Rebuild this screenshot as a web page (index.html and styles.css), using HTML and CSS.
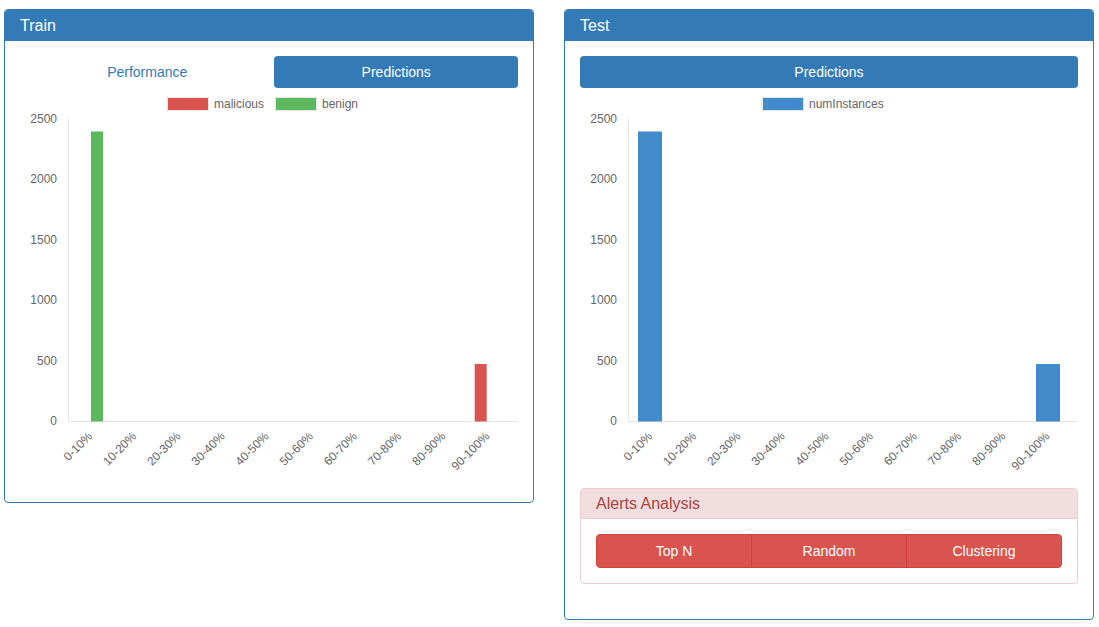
FILE: index.html
```html
<!DOCTYPE html>
<html>
<head>
<meta charset="utf-8">
<link rel="stylesheet" href="styles.css">
</head>
<body>
<div class="page">
  <section class="panel panel-train">
    <div class="panel-heading">Train</div>
    <div class="panel-body">
      <ul class="pills">
        <li class="pill">Performance</li>
        <li class="pill active">Predictions</li>
      </ul>
      <svg class="chart" width="498" height="399" viewBox="0 0 498 399">
        <rect x="147.5" y="9.5" width="41" height="13" fill="#d9534f" stroke="#e6e6e6"/>
        <text class="lg" x="194" y="19.5">malicious</text>
        <rect x="255.5" y="9.5" width="41" height="13" fill="#5cb85c" stroke="#e6e6e6"/>
        <text class="lg" x="302" y="19.5">benign</text>
        <g class="yl">
          <text x="37" y="34.5">2500</text>
          <text x="37" y="95">2000</text>
          <text x="37" y="155.5">1500</text>
          <text x="37" y="216">1000</text>
          <text x="37" y="276.5">500</text>
          <text x="37" y="337">0</text>
        </g>
        <line x1="48.5" y1="30" x2="48.5" y2="334" stroke="#e5e5e5"/>
        <line x1="48" y1="333.5" x2="498" y2="333.5" stroke="#e5e5e5"/>
        <rect x="71" y="43.5" width="12" height="290" fill="#5cb85c"/>
        <rect x="454.7" y="276" width="12" height="57.5" fill="#d9534f"/>
        <g class="xl">
          <text x="73" y="349" transform="rotate(-45 73 349)">0-10%</text>
          <text x="117.15" y="349" transform="rotate(-45 117.15 349)">10-20%</text>
          <text x="161.3" y="349" transform="rotate(-45 161.3 349)">20-30%</text>
          <text x="205.45" y="349" transform="rotate(-45 205.45 349)">30-40%</text>
          <text x="249.6" y="349" transform="rotate(-45 249.6 349)">40-50%</text>
          <text x="293.75" y="349" transform="rotate(-45 293.75 349)">50-60%</text>
          <text x="337.9" y="349" transform="rotate(-45 337.9 349)">60-70%</text>
          <text x="382.05" y="349" transform="rotate(-45 382.05 349)">70-80%</text>
          <text x="426.2" y="349" transform="rotate(-45 426.2 349)">80-90%</text>
          <text x="470.35" y="349" transform="rotate(-45 470.35 349)">90-100%</text>
        </g>
      </svg>
    </div>
  </section>

  <section class="panel panel-test">
    <div class="panel-heading">Test</div>
    <div class="panel-body">
      <ul class="pills">
        <li class="pill active">Predictions</li>
      </ul>
      <svg class="chart" width="498" height="399" viewBox="0 0 498 399">
        <rect x="182.5" y="9.5" width="41" height="13" fill="#428bca" stroke="#e6e6e6"/>
        <text class="lg" x="229" y="19.5">numInstances</text>
        <g class="yl">
          <text x="37" y="34.5">2500</text>
          <text x="37" y="95">2000</text>
          <text x="37" y="155.5">1500</text>
          <text x="37" y="216">1000</text>
          <text x="37" y="276.5">500</text>
          <text x="37" y="337">0</text>
        </g>
        <line x1="48.5" y1="30" x2="48.5" y2="334" stroke="#e5e5e5"/>
        <line x1="48" y1="333.5" x2="497" y2="333.5" stroke="#e5e5e5"/>
        <rect x="58" y="43.5" width="24" height="290" fill="#428bca"/>
        <rect x="456" y="276" width="24" height="57.5" fill="#428bca"/>
        <g class="xl">
          <text x="73" y="349" transform="rotate(-45 73 349)">0-10%</text>
          <text x="117.15" y="349" transform="rotate(-45 117.15 349)">10-20%</text>
          <text x="161.3" y="349" transform="rotate(-45 161.3 349)">20-30%</text>
          <text x="205.45" y="349" transform="rotate(-45 205.45 349)">30-40%</text>
          <text x="249.6" y="349" transform="rotate(-45 249.6 349)">40-50%</text>
          <text x="293.75" y="349" transform="rotate(-45 293.75 349)">50-60%</text>
          <text x="337.9" y="349" transform="rotate(-45 337.9 349)">60-70%</text>
          <text x="382.05" y="349" transform="rotate(-45 382.05 349)">70-80%</text>
          <text x="426.2" y="349" transform="rotate(-45 426.2 349)">80-90%</text>
          <text x="470.35" y="349" transform="rotate(-45 470.35 349)">90-100%</text>
        </g>
      </svg>
      <div class="alerts">
        <div class="alerts-heading">Alerts Analysis</div>
        <div class="alerts-body">
          <div class="btn-group">
            <div class="btn">Top N</div>
            <div class="btn">Random</div>
            <div class="btn">Clustering</div>
          </div>
        </div>
      </div>
    </div>
  </section>
</div>
</body>
</html>
```

FILE: styles.css
```css
* { box-sizing: border-box; }
html, body { margin: 0; padding: 0; background: #fff; }
body {
  font-family: "Liberation Sans", Arial, sans-serif;
  font-size: 14px;
  color: #333;
}
.page {
  display: flex;
  align-items: flex-start;
  gap: 30px;
  padding: 9px 0 0 4px;
}
.panel {
  width: 530px;
  border: 1px solid #337ab7;
  border-radius: 4px;
  background: #fff;
}
.panel-heading {
  height: 31px;
  background: #337ab7;
  color: #fff;
  font-size: 16px;
  line-height: 20px;
  padding: 6px 15px 5px;
  border-radius: 3px 3px 0 0;
}
.panel-body {
  padding: 15px 15px 15px;
}
.pills {
  list-style: none;
  margin: 0;
  padding: 0;
  display: flex;
}
.pill {
  flex: 1 1 auto;
  text-align: center;
  padding: 6px 15px;
  line-height: 20px;
  height: 32px;
  font-size: 14px;
  color: #337ab7;
  border-radius: 4px;
}
.pill.active {
  background: #337ab7;
  color: #fff;
}
.chart {
  display: block;
  font-family: "Liberation Sans", Arial, sans-serif;
  font-size: 12px;
}
.chart text { fill: #666; }
.chart .yl text { text-anchor: end; }
.chart .xl text { text-anchor: end; }
.alerts {
  margin-top: 1px;
  margin-bottom: 20px;
  border: 1px solid #ebccd1;
  border-radius: 4px;
}
.alerts-heading {
  height: 30px;
  background: #f2dede;
  color: #a94442;
  font-size: 16px;
  line-height: 20px;
  padding: 5px 15px 4px;
  border-bottom: 1px solid #ebccd1;
  border-radius: 3px 3px 0 0;
}
.alerts-body {
  padding: 15px;
}
.btn-group {
  display: flex;
}
.btn {
  flex: 1 1 0;
  text-align: center;
  background: #d9534f;
  border: 1px solid #d43f3a;
  color: #fff;
  font-size: 14px;
  line-height: 20px;
  padding: 6px 12px;
  height: 34px;
}
.btn + .btn { margin-left: -1px; }
.btn:first-child { border-radius: 4px 0 0 4px; }
.btn:last-child { border-radius: 0 4px 4px 0; }
```
